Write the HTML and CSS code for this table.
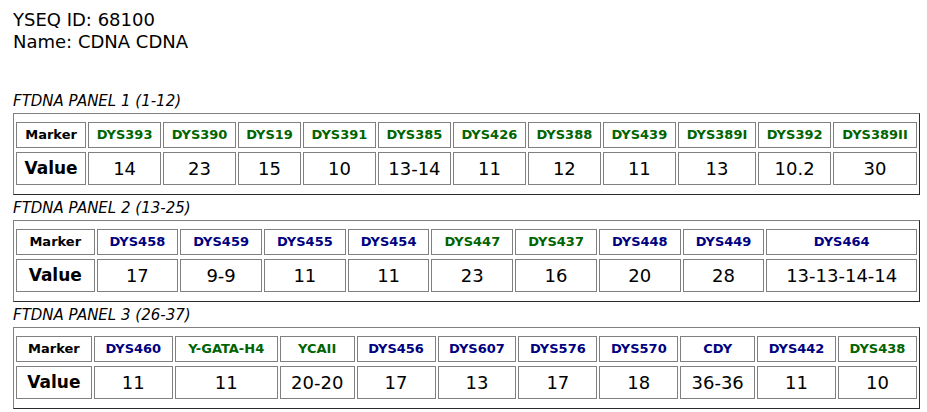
FILE: index.html
```html
<!DOCTYPE html>
<html>
<head>
<meta charset="utf-8">
<title>YSEQ 68100</title>
<link rel="stylesheet" href="styles.css">
</head>
<body>
<div class="info">
  <div>YSEQ ID: 68100</div>
  <div>Name: CDNA CDNA</div>
</div>

<div class="caption">FTDNA PANEL 1 (1-12)</div>
<div class="panel">
  <table class="str">
    <tr class="mrow">
      <th>Marker</th>
      <td class="g">DYS393</td><td class="g">DYS390</td><td class="g">DYS19</td><td class="g">DYS391</td><td class="g">DYS385</td><td class="g">DYS426</td><td class="g">DYS388</td><td class="g">DYS439</td><td class="g">DYS389I</td><td class="g">DYS392</td><td class="g">DYS389II</td>
    </tr>
    <tr class="vrow">
      <th>Value</th>
      <td>14</td><td>23</td><td>15</td><td>10</td><td>13-14</td><td>11</td><td>12</td><td>11</td><td>13</td><td>10.2</td><td>30</td>
    </tr>
  </table>
</div>

<div class="caption">FTDNA PANEL 2 (13-25)</div>
<div class="panel">
  <table class="str">
    <tr class="mrow">
      <th>Marker</th>
      <td class="b">DYS458</td><td class="b">DYS459</td><td class="b">DYS455</td><td class="b">DYS454</td><td class="g">DYS447</td><td class="g">DYS437</td><td class="b">DYS448</td><td class="b">DYS449</td><td class="b">DYS464</td>
    </tr>
    <tr class="vrow">
      <th>Value</th>
      <td>17</td><td>9-9</td><td>11</td><td>11</td><td>23</td><td>16</td><td>20</td><td>28</td><td>13-13-14-14</td>
    </tr>
  </table>
</div>

<div class="caption">FTDNA PANEL 3 (26-37)</div>
<div class="panel">
  <table class="str">
    <tr class="mrow">
      <th>Marker</th>
      <td class="b">DYS460</td><td class="g">Y-GATA-H4</td><td class="g">YCAII</td><td class="b">DYS456</td><td class="b">DYS607</td><td class="b">DYS576</td><td class="b">DYS570</td><td class="b">CDY</td><td class="b">DYS442</td><td class="g">DYS438</td>
    </tr>
    <tr class="vrow">
      <th>Value</th>
      <td>11</td><td>11</td><td>20-20</td><td>17</td><td>13</td><td>17</td><td>18</td><td>36-36</td><td>11</td><td>10</td>
    </tr>
  </table>
</div>
</body>
</html>
```

FILE: styles.css
```css
html, body {
  background: #ffffff;
}
body {
  margin: 9px 7px 0 13px;
  font-family: "DejaVu Sans", Verdana, sans-serif;
  color: #000000;
}
.info {
  font-size: 18px;
  line-height: 22px;
  margin-bottom: 35px;
}
.caption {
  font-size: 15px;
  font-style: italic;
  line-height: 18px;
  padding-top: 4px;
  margin-bottom: 3px;
}
.panel {
  border: 1px solid;
  border-color: #808080 #2a2a2a #2a2a2a #808080;
  padding: 0 0 1px 0;
}
.str {
  width: 100%;
  border-collapse: separate;
  border-spacing: 2px 4px;
  margin: 4px 0;
}
.str th, .str td {
  border: 1px solid #808080;
  text-align: center;
  padding: 0 4px;
}
.mrow th, .mrow td {
  font-size: 13px;
  font-weight: bold;
  height: 24px;
  line-height: 16px;
}
.vrow th, .vrow td {
  font-size: 18px;
  height: 31px;
  line-height: 21px;
}
.vrow th {
  font-size: 17px;
}
.vrow td {
  font-weight: normal;
}
.g { color: #006400; }
.b { color: #000080; }
```
